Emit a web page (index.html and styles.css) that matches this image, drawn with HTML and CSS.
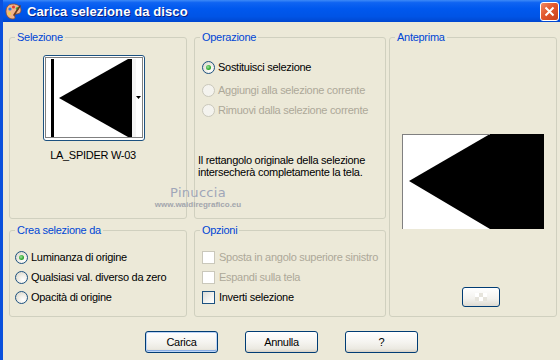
FILE: index.html
```html
<!DOCTYPE html>
<html lang="it">
<head>
    <meta charset="UTF-8">
    <title>Carica selezione da disco</title>
    <link rel="stylesheet" href="styles.css">
</head>
<body>
    <div class="window">
        <div class="titlebar">
            <svg class="app-icon" width="17" height="17" viewBox="0 0 17 17">
                <path d="M8 1 C3 1 1 4.5 1 8.5 C1 13 4 16 8 16 C10 16 10.5 14.5 9.5 13 C8.8 12 9.5 11 11 11 C14 11 16 10 16 7 C16 3.5 12.5 1 8 1 Z" fill="#f2b48a" stroke="#8a4a2a" stroke-width="0.8"/>
                <circle cx="5" cy="6" r="1.6" fill="#2a7de1"/>
                <circle cx="8.5" cy="4" r="1.5" fill="#e33b2e"/>
                <circle cx="12.3" cy="5.5" r="1.5" fill="#3cb043"/>
                <circle cx="4.5" cy="10.5" r="1.5" fill="#f4d03f"/>
                <path d="M9 12 L15 3" stroke="#6b3a1e" stroke-width="1.6" stroke-linecap="round"/>
            </svg>
            <span class="title">Carica selezione da disco</span>
            <div class="close-btn">
                <svg width="11" height="11" viewBox="0 0 11 11">
                    <path d="M1.5 1.5 L9.5 9.5 M9.5 1.5 L1.5 9.5" stroke="#fff" stroke-width="2"/>
                </svg>
            </div>
        </div>

        <div class="client">
            <div class="groups">
                <fieldset class="group group-sel">
                    <legend>Selezione</legend>
                    <div class="thumb-btn">
                        <svg width="100" height="84" viewBox="0 0 100 84">
                            <rect x="1.5" y="1.5" width="97" height="80" fill="#fff" stroke="#000" stroke-dasharray="1 1"/>
                            <rect x="7" y="3" width="3" height="78" fill="#000"/>
                            <polygon points="15,42 84,3 88,3 88,81 84,81" fill="#000"/>
                            <rect x="88" y="3" width="4" height="78" fill="#f4f4f4"/>
                            <polygon points="92,40 97,40 94.5,43" fill="#000"/>
                        </svg>
                    </div>
                    <div class="thumb-name">LA_SPIDER W-03</div>
                </fieldset>

                <fieldset class="group group-op">
                    <legend>Operazione</legend>
                    <div class="option first"><span class="radio checked"></span>Sostituisci selezione</div>
                    <div class="option disabled"><span class="radio"></span>Aggiungi alla selezione corrente</div>
                    <div class="option disabled"><span class="radio"></span>Rimuovi dalla selezione corrente</div>
                    <p class="note">Il rettangolo originale della selezione intersecherà completamente la tela.</p>
                </fieldset>

                <fieldset class="group group-preview">
                    <legend>Anteprima</legend>
                    <div class="preview">
                        <svg width="142" height="95" viewBox="0 0 142 95">
                            <rect width="142" height="95" fill="#fff"/>
                            <polygon points="7,47 88,0 142,0 142,95 88,95" fill="#000"/>
                            <path d="M0.5 0 V95 M0 0.5 H88" stroke="#808080" stroke-width="1"/>
                        </svg>
                    </div>
                    <div class="small-btn">
                        <svg width="12" height="8" viewBox="0 0 12 8">
                            <rect width="12" height="8" fill="#e6e4dc"/>
                            <rect x="0" y="0" width="4" height="4" fill="#fff"/>
                            <rect x="8" y="0" width="4" height="4" fill="#fff"/>
                            <rect x="4" y="4" width="4" height="4" fill="#fff"/>
                        </svg>
                    </div>
                </fieldset>

                <fieldset class="group group-crea">
                    <legend>Crea selezione da</legend>
                    <div class="option"><span class="radio checked"></span>Luminanza di origine</div>
                    <div class="option"><span class="radio"></span>Qualsiasi val. diverso da zero</div>
                    <div class="option"><span class="radio"></span>Opacità di origine</div>
                </fieldset>

                <fieldset class="group group-opt">
                    <legend>Opzioni</legend>
                    <div class="option disabled"><span class="check"></span>Sposta in angolo superiore sinistro</div>
                    <div class="option disabled"><span class="check"></span>Espandi sulla tela</div>
                    <div class="option"><span class="check"></span>Inverti selezione</div>
                </fieldset>
            </div>

            <div class="buttons">
                <div class="btn default">Carica</div>
                <div class="btn">Annulla</div>
                <div class="btn">?</div>
            </div>

            <div class="watermark">
                <div class="wm-name">Pinuccia</div>
                <div class="wm-url">www.waidiregrafico.eu</div>
            </div>
        </div>
    </div>
</body>
</html>
```

FILE: styles.css
```css
body {
    margin: 0;
    padding: 0;
    background-color: #ece9d8;
    font-family: "Liberation Sans", Arial, sans-serif;
    font-size: 11px;
    color: #000;
}
.window {
    width: 557px;
    height: 360px;
    border-left: 3px solid #0a50dc;
    background-color: #ece9d8;
    overflow: hidden;
}
.titlebar {
    height: 22px;
    display: flex;
    align-items: center;
    background: linear-gradient(to bottom, #3d8af7 0%, #0f64f2 12%, #0058ee 40%, #0054e6 75%, #0047d0 100%);
}
.app-icon {
    margin-left: 2px;
    flex-shrink: 0;
}
.title {
    margin-left: 5px;
    color: #fff;
    font-size: 13px;
    font-weight: bold;
    letter-spacing: 0.1px;
    text-shadow: 1px 1px #0a1f80;
    flex-grow: 1;
}
.close-btn {
    width: 19px;
    height: 19px;
    box-sizing: border-box;
    margin-right: 1px;
    border: 1px solid #fff;
    border-radius: 3px;
    background: linear-gradient(135deg, #f08a65 0%, #e2572e 45%, #c9401a 100%);
    display: flex;
    align-items: center;
    justify-content: center;
}
.client {
    position: relative;
    height: 338px;
    letter-spacing: -0.28px;
}
.groups {
    display: grid;
    grid-template-columns: 178px 192px 168px;
    grid-template-rows: 188px 93px;
    column-gap: 7px;
    row-gap: 5px;
    padding: 9px 0 0 6px;
}
.group {
    margin: 0;
    padding: 0;
    min-width: 0;
    box-sizing: border-box;
    border: 1px solid #d0d0bf;
    border-radius: 3px;
}
.group legend {
    color: #0046d5;
    font-size: 11px;
    line-height: 13px;
    padding: 0 2px;
    margin-left: 5px;
}
.group-sel { grid-column: 1; grid-row: 1; }
.group-op { grid-column: 2; grid-row: 1; }
.group-crea { grid-column: 1; grid-row: 2; }
.group-opt { grid-column: 2; grid-row: 2; }
.group-preview {
    grid-column: 3;
    grid-row: 1 / 3;
    width: 168px;
    margin-left: -4px;
}
.thumb-btn {
    width: 102px;
    height: 86px;
    box-sizing: border-box;
    margin: 11px 0 0 33px;
    border: 1px solid #1c5180;
    border-radius: 3px;
    background-color: #fff;
}
.thumb-btn svg {
    display: block;
}
.thumb-name {
    width: 166px;
    margin-top: 8px;
    text-align: center;
    line-height: 13px;
}
.option {
    display: flex;
    align-items: center;
    height: 20px;
    white-space: nowrap;
}
.option.disabled {
    color: #aca899;
}
.group-op .option {
    padding-left: 7px;
}
.group-op .option.first {
    margin-top: 13px;
    margin-bottom: 3px;
}
.group-crea .option {
    padding-left: 5px;
}
.group-crea .option:first-of-type {
    margin-top: 10px;
}
.group-opt .option {
    padding-left: 7px;
}
.group-opt .option:first-of-type {
    margin-top: 10px;
}
.radio {
    width: 13px;
    height: 13px;
    box-sizing: border-box;
    border-radius: 50%;
    border: 1px solid #1c5180;
    background: radial-gradient(circle at 65% 70%, #fff 0%, #f1efe8 40%, #d6d2c4 100%);
    margin-right: 3px;
    display: flex;
    align-items: center;
    justify-content: center;
    flex-shrink: 0;
}
.radio.checked::after {
    content: "";
    width: 5px;
    height: 5px;
    border-radius: 50%;
    background: radial-gradient(circle at 40% 40%, #9be29b 0%, #2fa72f 60%, #1e8a1e 100%);
}
.disabled .radio {
    border-color: #cac8bb;
    background: #f4f3ee;
}
.check {
    width: 13px;
    height: 13px;
    box-sizing: border-box;
    border: 1px solid #1c5180;
    background: linear-gradient(135deg, #dcdcd7 0%, #f4f4f1 60%, #fff 100%);
    margin-right: 4px;
    flex-shrink: 0;
}
.disabled .check {
    border-color: #cac8bb;
    background: #fff;
}
.note {
    margin: 34px 0 0 3px;
    line-height: 12px;
}
.preview {
    margin: 90px 0 0 12px;
    width: 142px;
    height: 95px;
}
.preview svg {
    display: block;
}
.small-btn {
    width: 38px;
    height: 20px;
    box-sizing: border-box;
    margin: 58px 0 0 72px;
    border: 1px solid #003c74;
    border-radius: 3px;
    background: linear-gradient(to bottom, #fff 0%, #f3f2ee 60%, #dedbd2 100%);
    display: flex;
    align-items: center;
    justify-content: center;
}
.buttons {
    display: flex;
    justify-content: center;
    gap: 27px;
    margin-top: 14px;
}
.btn {
    width: 73px;
    height: 22px;
    box-sizing: border-box;
    border: 1px solid #003c74;
    border-radius: 3px;
    background: linear-gradient(to bottom, #fff 0%, #f5f4f0 50%, #ebe9e1 85%, #d6d0c5 100%);
    display: flex;
    align-items: center;
    justify-content: center;
}
.btn.default {
    box-shadow: inset 0 0 0 1px #bcd4f6, inset 0 -1px 0 1px #89ade4;
}
.watermark {
    position: absolute;
    left: 145px;
    top: 164px;
    width: 100px;
    text-align: center;
    letter-spacing: 0;
    pointer-events: none;
}
.wm-name {
    font-family: "DejaVu Sans", sans-serif;
    font-size: 13px;
    line-height: 14px;
    letter-spacing: 0.3px;
    color: #9fa6b8;
}
.wm-url {
    font-size: 8px;
    line-height: 10px;
    font-weight: bold;
    color: #a3a6ad;
}
```
